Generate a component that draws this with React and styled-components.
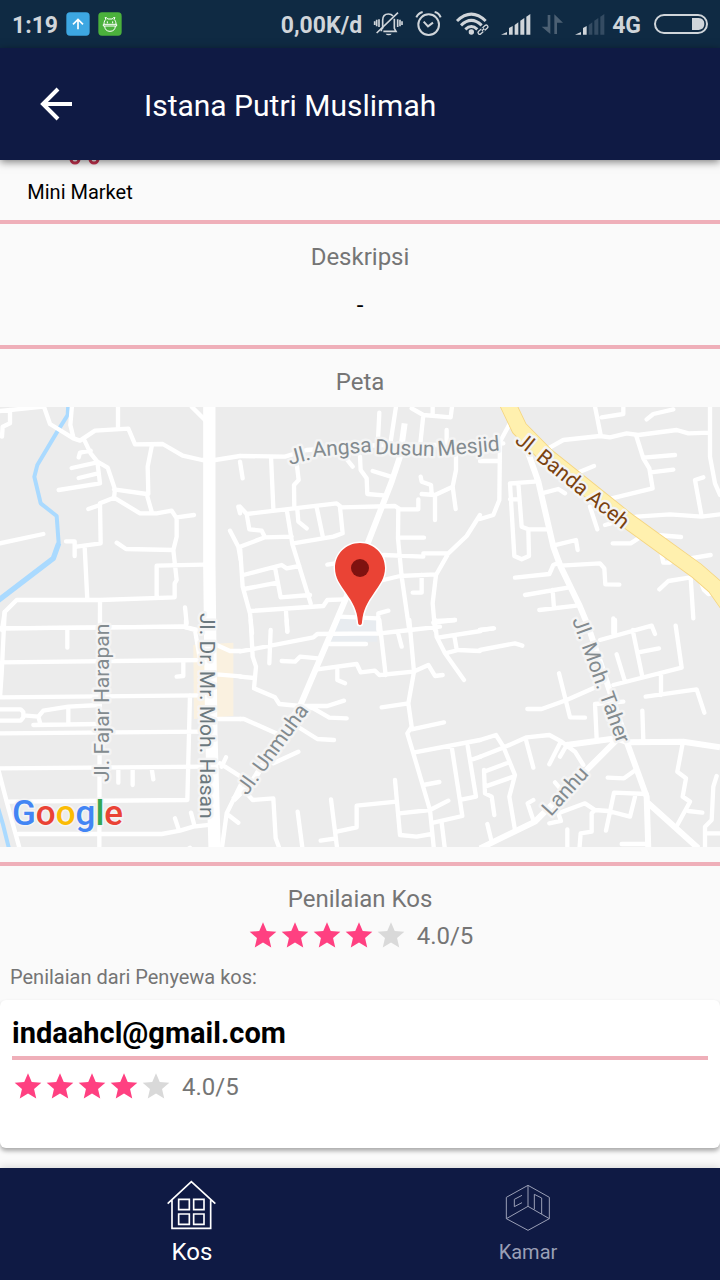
import React from "react";
import styled, { createGlobalStyle } from "styled-components";

const navy = "#0f1a44";
const pink = "#ff4081";
const statusInk = "#d0d5da";

const GlobalStyle = createGlobalStyle`
  *, *::before, *::after { box-sizing: border-box; }
  body {
    margin: 0;
    background: #fafafa;
    font-family: Roboto, "Liberation Sans", sans-serif;
  }
`;

const Screen = styled.div`
  min-height: 100vh;
  display: flex;
  flex-direction: column;
`;

const StatusBar = styled.div`
  height: 48px;
  padding: 0 11px 0 12px;
  display: flex;
  align-items: center;
  justify-content: space-between;
  background: #0f2a43;
  color: ${statusInk};
  font-size: 23px;
  font-weight: 700;
  line-height: 44px;
`;

const StatusGroup = styled.div`
  display: flex;
  align-items: center;
  gap: ${({ $gap }) => $gap}px;

  span { padding-top: 4px; }
`;

const StatusIcon = styled.svg`
  flex: none;
  height: 48px;
  width: ${({ $width }) => $width}px;
  overflow: visible;
  fill: none;
  stroke: ${statusInk};
  stroke-width: ${({ $stroke }) => $stroke || 6};
`;

const AppBar = styled.header`
  position: relative;
  z-index: 1;
  height: 112px;
  padding: 0 32px;
  display: flex;
  align-items: center;
  gap: 64px;
  background: ${navy};
  color: #fff;
  box-shadow: 0 2px 8px rgba(0, 0, 0, 0.5);
`;

const BackButton = styled.button`
  width: 48px;
  height: 48px;
  padding: 0;
  border: 0;
  background: none;
  color: inherit;
  cursor: pointer;

  svg { display: block; }
`;

const Title = styled.h1`
  margin: 0;
  padding-top: 3px;
  font-size: 30px;
  font-weight: 400;
  line-height: 40px;
`;

const Main = styled.main`
  flex: 1;
`;

const Section = styled.section`
  padding: 17px 0 ${({ $bottom }) => $bottom}px;
  border-bottom: ${({ $last }) => ($last ? 0 : 4)}px solid #efafb9;
  text-align: center;
`;

const Facility = styled.section`
  height: 64px;
  border-bottom: 4px solid #efafb9;
`;

const FacilityItem = styled.figure`
  width: 160px;
  margin: 0;
  display: flex;
  flex-direction: column;
  align-items: center;
  gap: 12px;

  svg { margin-left: 8px; display: block; }
  figcaption { font-size: 20px; line-height: 28px; }
`;

const Heading = styled.h2`
  margin: 0;
  color: #757575;
  font-size: 24px;
  font-weight: 400;
  line-height: 32px;
`;

const Description = styled.p`
  margin: 16px 0 0;
  font-size: 24px;
  line-height: 32px;
`;

const MapView = styled.svg`
  display: block;
  width: 100%;
  height: 440px;
  margin-top: 9px;
  background: #ececec;
`;

const MapLabel = styled.text`
  font-size: 21px;
  fill: ${({ $ink }) => $ink || "#838b8f"};
  stroke: #f4f4f4;
  stroke-width: 5px;
  stroke-linejoin: round;
  paint-order: stroke;
`;

const Logo = styled.text`
  font-size: 35px;
  font-weight: 500;
  stroke: #f4f4f4;
  stroke-width: 3px;
  paint-order: stroke;
`;

const RatingRow = styled.div`
  display: flex;
  align-items: center;
  justify-content: ${({ $center }) => ($center ? "center" : "flex-start")};
  margin-top: ${({ $top }) => $top}px;
  color: #757575;
  font-size: 24px;
  line-height: 32px;

  span { margin-left: 10px; }
`;

const Star = styled.svg`
  width: 32px;
  height: 32px;
  fill: ${({ $on }) => ($on ? pink : "#d9d9d9")};
`;

const Caption = styled.p`
  margin: 13px 0 11px;
  padding: 0 10px;
  color: #757575;
  font-size: 20px;
  line-height: 24px;
  text-align: left;
`;

const Review = styled.article`
  padding: 12px 12px 45px;
  border-radius: 6px;
  background: #fff;
  box-shadow: 0 3px 4px rgba(0, 0, 0, 0.32);
`;

const Reviewer = styled.h3`
  margin: 0;
  padding: 1px 0 3px;
  border-bottom: 4px solid #efafb9;
  font-size: 29px;
  font-weight: 700;
  line-height: 40px;
  text-align: left;
`;

const BottomNav = styled.nav`
  height: 112px;
  padding: 0 24px;
  display: flex;
  background: ${navy};
  box-shadow: 0 -1px 8px rgba(0, 0, 0, 0.15);
`;

const NavItem = styled.button`
  flex: 1;
  padding: 12px 0 0;
  display: flex;
  flex-direction: column;
  align-items: center;
  gap: 6px;
  border: 0;
  background: none;
  color: ${({ $active }) => ($active ? "#fff" : "#9a9fb6")};
  font-family: inherit;
  font-size: ${({ $active }) => ($active ? 24 : 20)}px;
  line-height: 32px;
  cursor: pointer;
`;

const ROUTES = [
  {
    x: 0,
    y: 0,
    d: `M-10 34L130 20M30 30V70L8 80L6 110M130 15L150 72L220 115L240 122L285 92L385 86L405 133L488 132L548 167L606 180H645L720 168
    M216 15L211 75L220 112M354 15V86M252 118L272 160L292 185L323 203L345 268L342 293L300 310L302 430L230 440M198 424H224V468
    M272 152L240 158L236 172M215 204L292 187M236 234L294 220M176 270L300 250L292 185M342 268L440 282L455 335M455 140L443 200L445 282
    M342 293L420 340L470 340L515 332L530 355V410L520 450L530 540L524 550V592L300 600H50L14 636L6 690M530 352L582 345M265 327L300 315
    M350 428L378 447L520 450M470 590V497L612 494M254 440L262 600M0 430L130 402M300 600L298 1345M555 622L560 670M0 685L550 680L595 690
    M575 20L615 60M690 392L715 440L722 480`,
  },
  {
    x: 720,
    y: 0,
    d: `M0 168L135 170L200 150L420 135H700L790 130M0 185L8 235M93 170L100 325M170 190L176 240L162 255L163 325M310 165L338 200
    M360 170L362 210L380 235L382 282L440 287M418 38L414 120M468 20L452 125M398 213L460 232M515 25L550 45L632 52L636 20M578 20V45
    M550 45L540 140M620 90V130M648 165V210L638 260L585 285L545 282M585 285V360M638 260L647 327M542 230L545 245L573 255L575 280
    M0 320L20 342L290 310L305 322L465 318L480 328H535V298M300 322L308 400L280 410L160 430M20 342L28 388L65 392L75 412
    M0 440L75 412L155 410M140 328L157 432L212 610M172 328L175 365L200 385M230 322L248 408M0 440L8 560L30 640L36 700
    M10 525L125 495L140 505L178 498M12 567L112 548M105 502L122 592L210 585M30 633L250 618L262 600L315 598M138 635L142 695
    M475 325L474 415L485 530L508 690M480 413H552M262 494L300 488M430 465L550 470M550 460H625M720 345L680 408L625 460L588 525L578 610L585 690
    M430 540L480 528L588 523M545 525V578H518M445 632L415 640V690M590 663L645 660M300 650L410 655M-5 320L0 340`,
  },
  {
    x: 1440,
    y: 0,
    d: `M90 70L60 125L58 300L40 345L0 357M0 183H60M345 20L362 105M365 52L430 42V20M500 58L520 42L580 28
    M205 145L250 120L360 108L390 112L440 100L475 105L590 90L625 100L690 98M690 20V170L705 250L720 285
    M468 105L490 175L508 205L518 265L395 295M490 173L585 165M512 217L580 209M300 215L342 198M670 232L645 240L665 350
    M375 375L470 350L570 343L665 350L720 343M330 320L352 388M530 405L603 411M398 430H452L475 415
    M165 245L90 250L103 468L125 478L147 468L145 388L205 388M145 388L125 380L115 250M90 298H118M185 280L235 267L255 280
    M222 436L288 420L293 450M105 533L208 522L220 495L240 487M242 497L360 490L373 505L376 553L418 554
    M135 585L268 562M218 570L222 625M178 630L290 617M630 475L692 465M545 465L550 488H570L575 480M538 568L565 543L632 532L640 655
    M660 540L672 570L685 582L705 580M400 655V700M0 690L40 685`,
  },
  {
    x: 0,
    y: 660,
    d: `M14 -24L5 160L0 232M10 25L550 20L585 30L600 120M202 25V83M558 0V20M5 127L600 120M550 125V168L530 170M0 232L600 226
    M0 268H62L70 276V292L62 302H0M70 286L115 290L120 308M100 315L300 312M115 290L130 272L205 260L300 255M205 260V312
    M0 340L610 335M570 226L562 540L20 545M0 445L620 440M355 450V488M398 450V495M455 445L460 478M-10 430L20 545L60 690
    M55 642H485L540 632L580 620L640 613M525 595L535 625M573 578L582 612M650 75L690 93H722M650 163L722 169M655 297H722
    M665 440L678 412M660 430L722 470M722 495L680 580L665 690M685 585L715 608M560 690L570 683`,
  },
  {
    x: 720,
    y: 660,
    d: `M32 0L38 110L48 140L42 205L105 232L118 252L180 258H262L312 242M92 30L88 130M140 0L142 35M0 94L40 87L220 52L232 42L420 40L510 30L600 20
    M270 72H378M125 123L165 125L180 110L235 115M232 148L350 132L362 157L405 152L418 165L520 155L565 135L585 168L608 165M292 150V180L315 190
    M418 0L437 165M475 42L485 80M508 0L522 155L505 250L515 320L502 340L520 400L570 570L582 690M425 262L505 250M515 328L612 307
    M585 0L590 50L615 100L672 180M598 52L722 33M615 100L655 90L720 93M643 48L650 88M645 0L580 8M180 258L220 265L268 293L320 295M0 170L42 174
    M0 297H12L115 343M165 315L232 357L282 360M100 430L175 395M20 520L38 540L100 535L107 655L120 690M173 575L188 690M273 538L292 690
    M242 662L288 655M290 635L350 622V557L470 545M465 480L480 645L530 650L575 642M478 580L570 570L625 542M550 495L598 486
    M520 398L720 360M635 380L667 588L580 608M605 608L615 690M683 378L708 530L660 540M692 420L722 410`,
  },
  {
    x: 1440,
    y: 660,
    d: `M0 90L105 70L127 77M0 30L42 25M360 60L515 17L525 42M405 0V40M458 30L487 170M475 97L537 85M410 103L435 185
    M587 17L605 143L400 195M350 200L260 240L185 267H142M237 160L270 292L315 293M543 160V225M497 230L650 208L673 278
    M430 245L345 252L350 355M487 272L490 362M0 360L48 345L70 380L105 465L88 530L105 630
    M0 410L65 385L140 352L208 345L245 365L285 395L310 435M138 360L160 443M240 370L208 433M262 372L240 410
    M20 452L80 430M15 500L100 470M12 450L15 520L35 530L43 585M22 612L35 665M160 540L143 550L160 600M225 487L240 505
    M383 473L432 475L470 448M208 610L243 603L235 580L315 550L345 570L385 573L450 590L465 530M500 522L402 518L378 632
    M345 570L335 580V635L302 640L298 690M262 628V690M425 672H505M608 370L592 455L618 475L608 530L630 545L592 615M625 573L667 578
    M710 468L700 500L695 600L675 620V690M675 640H722`,
  },
];

const WIDE_ROUTES = `M1214 70L1200 170L1175 245L1105 425L1040 590L900 918L760 1140L700 1200
M1585 160L1615 245L1660 440L1682 500L1740 620L1765 680L1880 1025L1940 1190L1945 1350M1940 1205L2095 1345
M1700 1035L1850 1015L1885 1027L2050 1025L2160 1042M1850 1020L1605 1265L1440 1345`;

const RIVER = "M205 10L203 45L170 98L112 195L103 230L122 310L170 348L176 430L160 475L-10 605M-10 1210L8 1270L28 1350";
const HIGHWAY = "M80 5L118 85L200 168L325 268L440 360L560 447L650 512L705 560L740 610";

function Map() {
  return (
    <MapView viewBox="0 407 720 440" preserveAspectRatio="xMidYMid slice" role="img" aria-label="Peta lokasi kos">
      <g transform="translate(0 400) scale(0.33333)" fill="none" strokeLinejoin="round">
        <rect x="-3000" width="9000" height="1400" fill="#ececec" />
        <path d="M580 735L700 728V948L582 957Z" fill="#faf1e0" />
        <path d="M1020 655H1132V725H990Z" fill="#e8ecf0" />
        <path d={RIVER} stroke="#aadaff" strokeWidth="12" />
        <path d="M176 430L160 475L-10 605" stroke="#aadaff" strokeWidth="16" />
        {ROUTES.map((r) => (
          <path key={`${r.x}-${r.y}`} d={r.d} transform={`translate(${r.x} ${r.y})`} stroke="#fff" strokeWidth="13" strokeLinecap="round" />
        ))}
        <path d={WIDE_ROUTES} stroke="#fff" strokeWidth="18" />
        <path d="M628 10V500L634 1000L644 1350" stroke="#fff" strokeWidth="37" />
        <path d={HIGHWAY} transform="translate(1440 0)" stroke="#f5d581" strokeWidth="50" />
        <path d={HIGHWAY} transform="translate(1440 0)" stroke="#fff0ae" strokeWidth="45" />
      </g>
      <MapLabel transform="translate(290 465) rotate(-15)">Jl.</MapLabel>
      <MapLabel transform="translate(313 457) rotate(-5)">Angsa</MapLabel>
      <MapLabel transform="translate(375 454) rotate(2)">Dusun</MapLabel>
      <MapLabel transform="translate(438 456) rotate(-5)">Mesjid</MapLabel>
      <MapLabel $ink="#7a420f" transform="translate(514 442) rotate(39)">Jl. Banda Aceh</MapLabel>
      <MapLabel transform="translate(109 782) rotate(-90)">Jl. Fajar Harapan</MapLabel>
      <MapLabel $ink="#6b787e" transform="translate(200 613) rotate(90)">Jl. Dr. Mr. Moh. Hasan</MapLabel>
      <MapLabel transform="translate(247 796) rotate(-54)">Jl. Unmuha</MapLabel>
      <MapLabel transform="translate(572 620) rotate(70)">Jl. Moh. Taher</MapLabel>
      <MapLabel transform="translate(551 817) rotate(-48)">Lanhu</MapLabel>
      <path
        d="M360 543C346 543 335 554 335 568C335 578 340 584 346 593C353 603 357 610 358 622Q358 625 360 625Q362 625 362 622C363 610 367 603 374 593C380 584 385 578 385 568C385 554 374 543 360 543Z"
        fill="#ea4335"
        stroke="#fff"
        strokeWidth="3"
        paintOrder="stroke"
      />
      <circle cx="360" cy="568" r="9" fill="#7f1210" />
      <Logo x="12" y="825">
        <tspan fill="#4285f4">G</tspan>
        <tspan fill="#ea4335">o</tspan>
        <tspan fill="#fbbc05">o</tspan>
        <tspan fill="#4285f4">g</tspan>
        <tspan fill="#34a853">l</tspan>
        <tspan fill="#ea4335">e</tspan>
      </Logo>
    </MapView>
  );
}

function Rating({ value, center, top }) {
  return (
    <RatingRow $center={center} $top={top}>
      {[1, 2, 3, 4, 5].map((n) => (
        <Star key={n} $on={n <= value} viewBox="0 0.4 24 24" aria-hidden="true">
          <path d="M12 17.27L18.18 21L16.54 13.97L22 9.24L14.81 8.63L12 2L9.19 8.63L2 9.24L7.46 13.97L5.82 21Z" />
        </Star>
      ))}
      <span>{value.toFixed(1)}/5</span>
    </RatingRow>
  );
}

function Signal({ width, bars }) {
  const shapes = ["M426 104L444 96V104Z", "M450 84L461 78V104H450Z", "M467 75L478 67V104H467Z", "M484 62L496 54V104H484Z", "M502 50L514 42V104H502Z"];
  return (
    <StatusIcon $width={width} viewBox={`423 0 ${width * 3} 144`}>
      {shapes.map((d, i) => (
        <path key={d} d={d} fill={i < bars ? statusInk : "#344b62"} stroke="none" />
      ))}
    </StatusIcon>
  );
}

export default function App() {
  return (
    <>
      <GlobalStyle />
      <Screen>
        <StatusBar>
          <StatusGroup $gap={8}>
            <span>1:19</span>
            <StatusIcon $width={24} $stroke={5} viewBox="201 0 72 144">
              <rect x="202" y="37" width="70" height="70" rx="11" fill="#3da7e2" stroke="none" />
              <path d="M237 88V59M222 73L237 58L252 73" stroke="#fff" />
            </StatusIcon>
            <StatusIcon $width={24} $stroke={3} viewBox="297 0 72 144">
              <rect x="298" y="37" width="70" height="70" rx="11" fill="#4bb13c" stroke="none" />
              <path d="M315 73C315 64 318 59 321 58L318 53H323L326 57H340L343 53H348L345 58C349 61 351 66 351 73M313 73H353V78H313ZM317 78C317 88 323 94 333 94C343 94 349 88 349 78M325 64V70M341 64V70" stroke="#fff" />
            </StatusIcon>
          </StatusGroup>
          <StatusGroup $gap={10}>
            <span>0,00K/d</span>
            <StatusIcon $width={32} $stroke={5} viewBox="39 0 96 144">
              <path d="M67 94V88L71 84V61C71 49 78 42 88 42C94 42 99 44 102 48M106 56V85L111 94H73" />
              <path d="M53 99L117 38M60 58V81M53 59V79M47 64V75M116 58V81M123 59V79M129 64V75" />
              <path d="M80 101H98Q96 106 89 106T80 101Z" fill={statusInk} stroke="none" />
            </StatusIcon>
            <StatusIcon $width={30} viewBox="165 0 90 144">
              <circle cx="209" cy="74" r="31" />
              <path d="M194 65L207 79L222 68M172 52Q178 39 191 36M227 36Q240 39 245 52" />
            </StatusIcon>
            <StatusIcon $width={36} $stroke={9} viewBox="285 0 108 144">
              <path d="M294 63Q337 22 380 63M306 76Q337 46 368 76M319 88Q337 71 355 88" />
              <circle cx="337" cy="96" r="8" fill={statusInk} stroke="none" />
              <g transform="translate(372 89) rotate(-42)" fill={statusInk} stroke="none">
                <path
                  fillRule="evenodd"
                  d="M-14 -7H-2Q5 -7 5 0T-2 7H-14Q-20 7 -20 0T-14 -7ZM-13 -3Q-16 -3 -16 0T-13 3H-3Q0 3 0 0T-3 -3ZM2 -7H14Q20 -7 20 0T14 7H2Q-5 7 -5 0T2 -7ZM3 -3Q0 -3 0 0T3 3H13Q16 3 16 0T13 -3Z"
                />
              </g>
            </StatusIcon>
            <Signal width={32} bars={5} />
            <StatusIcon $width={22} viewBox="549 0 66 144">
              <path d="M566 45H574V102L548 80H566ZM586 102H594V68H612L586 43Z" fill="#4c6073" stroke="none" />
            </StatusIcon>
            <Signal width={28} bars={2} />
            <span>4G</span>
            <StatusIcon $width={58} viewBox="873 0 174 144">
              <rect x="885" y="45" width="156" height="54" rx="27" />
              <path d="M996 54H1016Q1033 56 1033 72T1016 90H996Z" fill={statusInk} stroke="none" />
            </StatusIcon>
          </StatusGroup>
        </StatusBar>

        <AppBar>
          <BackButton type="button" aria-label="Kembali">
            <svg width="48" height="48" viewBox="0 0 48 48" fill="none" stroke="currentColor" strokeWidth="4">
              <path d="M40 24H11M26 9L11 24L26 39" />
            </svg>
          </BackButton>
          <Title>Istana Putri Muslimah</Title>
        </AppBar>

        <Main>
          <Facility>
            <FacilityItem>
              <svg width="32" height="6" viewBox="0 0 32 6" fill="none" stroke="#c93350" strokeWidth="3">
                <circle cx="7" cy="-1" r="4" />
                <circle cx="26" cy="-1" r="4" />
              </svg>
              <figcaption>Mini Market</figcaption>
            </FacilityItem>
          </Facility>

          <Section $bottom={24}>
            <Heading>Deskripsi</Heading>
            <Description>-</Description>
          </Section>

          <Section $bottom={15}>
            <Heading>Peta</Heading>
            <Map />
          </Section>

          <Section $bottom={20} $last>
            <Heading>Penilaian Kos</Heading>
            <Rating value={4} center top={5} />
            <Caption>Penilaian dari Penyewa kos:</Caption>
            <Review>
              <Reviewer>indaahcl@gmail.com</Reviewer>
              <Rating value={4} top={11} />
            </Review>
          </Section>
        </Main>

        <BottomNav>
          <NavItem type="button" $active aria-current="page">
            <svg width="50" height="50" viewBox="80 120 150 150" fill="none" stroke="currentColor" strokeWidth="5" overflow="visible">
              <path d="M82 191L153 125L225 191M95 181V265H211V181M115 178H147V209H115ZM160 178H191V209H160ZM115 222H147V253H115ZM160 222H191V253H160Z" />
            </svg>
            Kos
          </NavItem>
          <NavItem type="button">
            <svg width="50" height="50" viewBox="99 120 150 150" fill="none" stroke="currentColor" strokeWidth="3" overflow="visible">
              <path d="M174 136L238 172V236L174 271L109 236V172ZM174 136V199L109 236M174 199L238 236M156 166L133 178V200L156 188M193 208V163L215 174V222" />
            </svg>
            Kamar
          </NavItem>
        </BottomNav>
      </Screen>
    </>
  );
}
